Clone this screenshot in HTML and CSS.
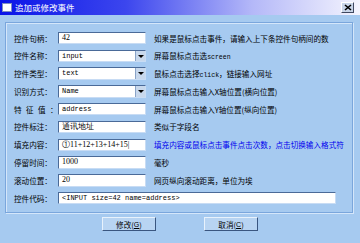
FILE: index.html
```html
<!DOCTYPE html>
<html lang="zh">
  <head>
    <meta charset="UTF-8" />
    <title>追加或修改事件</title>
    <link rel="stylesheet" href="styles.css">
  </head>
  <body>
    <div id="dialog">
      <div id="title-bar">
        <div id="title-icon"></div>
        <span id="title-text">追加或修改事件</span>
        <div id="close-button">
          <svg width="8" height="7" viewBox="0 0 8 7">
            <path d="M1 1L7 6M7 1L1 6" stroke="#000" stroke-width="1.6" />
          </svg>
        </div>
      </div>
      <div id="group-box">
        <div class="row">
          <span class="label">控件句柄：</span>
          <div class="field">42</div>
          <span class="hint">如果是鼠标点击事件，请输入上下条控件句柄间的数</span>
        </div>
        <div class="row">
          <span class="label">控件名称：</span>
          <div class="field select mono">input<span class="arrow"></span></div>
          <span class="hint">屏幕鼠标点击选<span class="mono">screen</span></span>
        </div>
        <div class="row">
          <span class="label">控件类型：</span>
          <div class="field select mono">text<span class="arrow"></span></div>
          <span class="hint">鼠标点击选择<span class="mono">click</span>，链接输入网址</span>
        </div>
        <div class="row">
          <span class="label">识别方式：</span>
          <div class="field select mono">Name<span class="arrow"></span></div>
          <span class="hint">屏幕鼠标点击输入X轴位置(横向位置)</span>
        </div>
        <div class="row">
          <span class="label spaced">特征值：</span>
          <div class="field mono">address</div>
          <span class="hint">屏幕鼠标点击输入Y轴位置(纵向位置)</span>
        </div>
        <div class="row">
          <span class="label">控件标注：</span>
          <div class="field">通讯地址</div>
          <span class="hint">类似于字段名</span>
        </div>
        <div class="row">
          <span class="label">填充内容：</span>
          <div class="field">①11+12+13+14+15|</div>
          <span class="hint blue">填充内容或鼠标点击事件点击次数，点击切换输入格式符</span>
        </div>
        <div class="row">
          <span class="label">停留时间：</span>
          <div class="field">1000</div>
          <span class="hint">毫秒</span>
        </div>
        <div class="row">
          <span class="label">滚动位置：</span>
          <div class="field">20</div>
          <span class="hint">网页纵向滚动距离，单位为埃</span>
        </div>
        <div class="row">
          <span class="label">控件代码：</span>
          <div class="field wide mono">&lt;INPUT size=42 name=address&gt;</div>
        </div>
      </div>
      <div id="button-bar">
        <div class="button">修改(<u>G</u>)</div>
        <div class="button">取消(<u>C</u>)</div>
      </div>
    </div>
  </body>
</html>
```

FILE: styles.css
```css
* {
  box-sizing: border-box;
  margin: 0;
  padding: 0;
}

body {
  width: 360px;
  height: 243px;
  overflow: hidden;
  background-color: #a6caf0;
  font-family: "Noto Sans CJK SC", "Liberation Sans", sans-serif;
  font-size: 7.5px;
  color: #000;
}

#dialog {
  display: flex;
  flex-direction: column;
  height: 243px;
}

#title-bar {
  height: 15px;
  display: flex;
  align-items: center;
  padding: 0 6px 0 2px;
  background: linear-gradient(to right, #0a14e8 0%, #3c46ee 35%, #b4b8f8 70%, #f4f4fe 100%);
}

#title-icon {
  width: 10px;
  height: 9px;
  background-color: #fff;
  border: 1px solid #8090c0;
  margin-right: 3px;
}

#title-text {
  color: #fff;
  font-size: 8.5px;
  line-height: 15px;
  flex-grow: 1;
}

#close-button {
  width: 13px;
  height: 11px;
  background-color: #c8d4e8;
  border: 1px solid;
  border-color: #fff #404860 #404860 #fff;
  display: flex;
  justify-content: center;
  align-items: center;
}

#group-box {
  margin: 7px 7px 0 5px;
  height: 191px;
  border: 1px solid #7aa6dc;
  box-shadow: inset 1px 1px 0 #d4e6fa, 1px 1px 0 #d4e6fa;
  padding: 9px 0 0 8px;
  display: flex;
  flex-direction: column;
  gap: 5.8px;
}

.row {
  display: flex;
  align-items: center;
  height: 12px;
}

.label {
  width: 44px;
  white-space: nowrap;
  font-size: 7.6px;
}

.label.spaced {
  letter-spacing: 4.4px;
}

.field {
  position: relative;
  width: 88px;
  height: 12.5px;
  background-color: #fff;
  border: 1px solid;
  border-color: #4a6a98 #c8dcf4 #c8dcf4 #4a6a98;
  font-family: "Liberation Serif", serif;
  font-size: 8px;
  line-height: 10px;
  padding-left: 3px;
  white-space: nowrap;
  overflow: hidden;
}

.mono {
  font-family: "Liberation Mono", monospace;
  font-size: 7px;
}

.field.wide {
  width: 278px;
}

.arrow {
  position: absolute;
  right: 0;
  top: 0;
  width: 10px;
  height: 10.5px;
  background-color: #c8d8ec;
  border-left: 1px solid #8aa4c8;
}

.arrow::after {
  content: "";
  position: absolute;
  left: 2px;
  top: 4px;
  border-left: 3px solid transparent;
  border-right: 3px solid transparent;
  border-top: 3px solid #000;
}

.hint {
  margin-left: 8px;
  white-space: nowrap;
  font-size: 7.6px;
}

.hint .mono {
  font-size: 6.5px;
}

.blue {
  color: #0000ee;
}

#button-bar {
  display: flex;
  gap: 48px;
  padding: 4px 0 0 102px;
}

.button {
  width: 54px;
  height: 14px;
  background-color: #b8d4f2;
  border: 1px solid;
  border-color: #e8f2fc #3a5680 #3a5680 #e8f2fc;
  display: flex;
  justify-content: center;
  align-items: center;
  font-size: 7.6px;
}

.button u {
  font-family: "Liberation Sans", sans-serif;
  font-size: 7px;
}
```
